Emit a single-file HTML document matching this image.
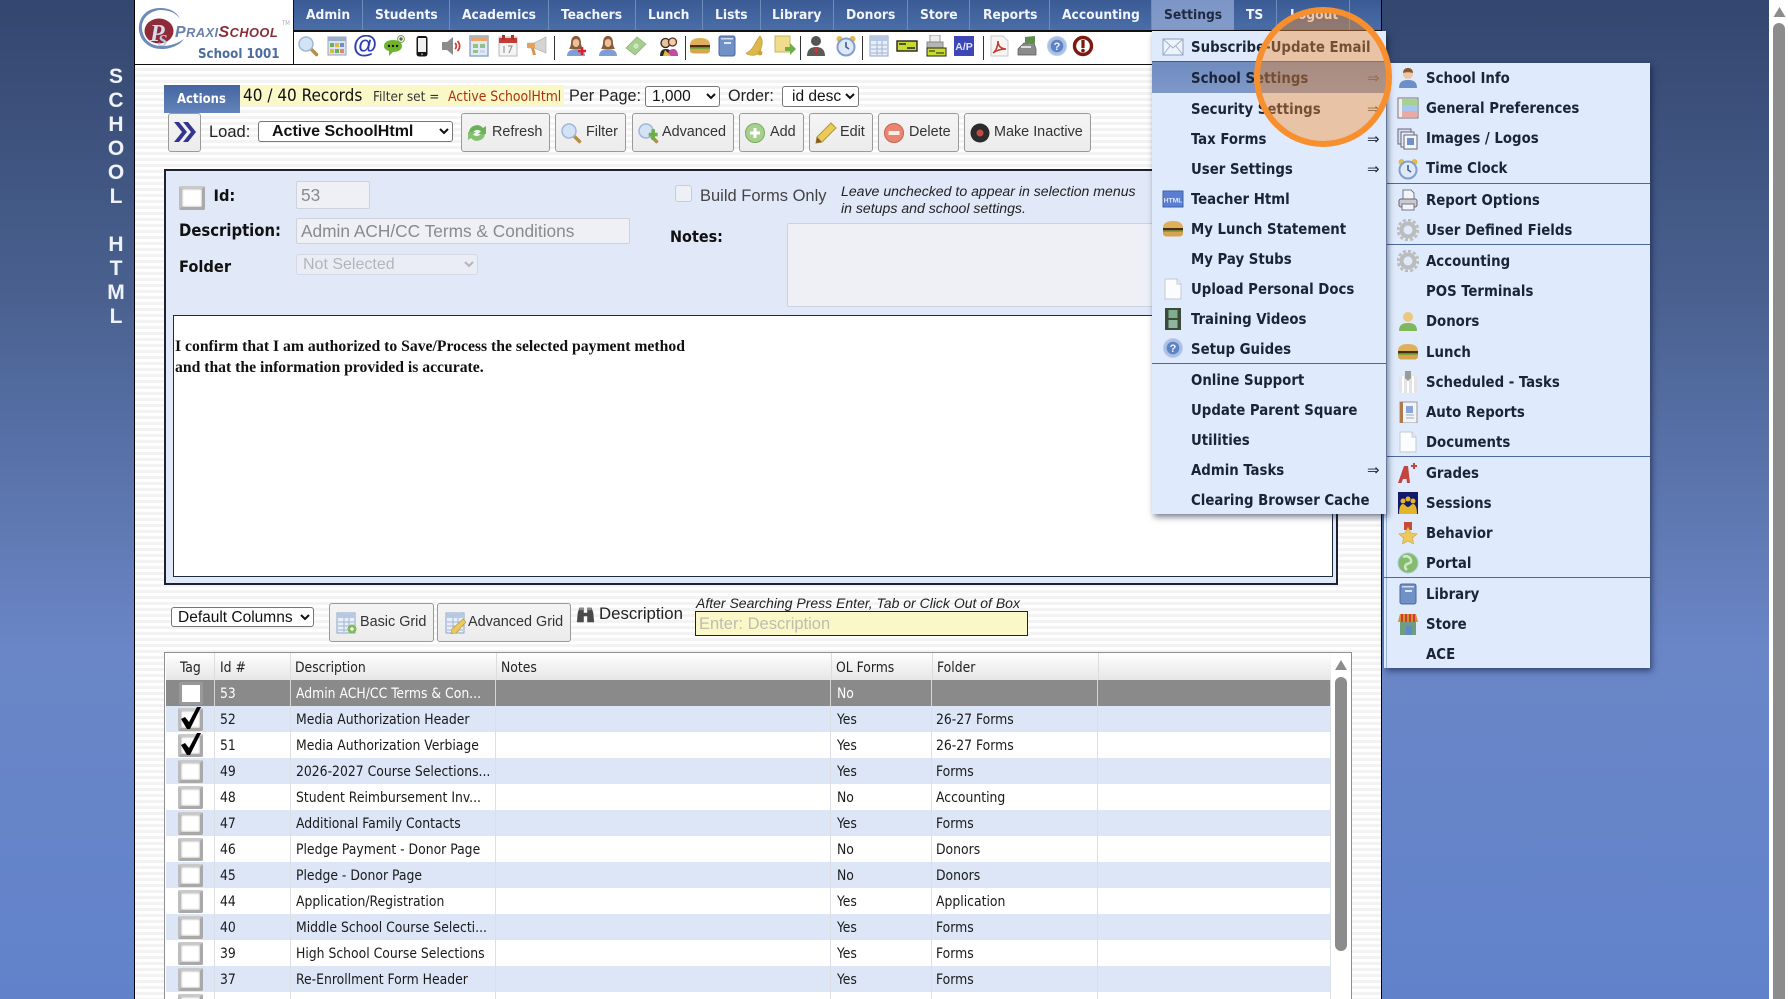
<!DOCTYPE html>
<html><head><meta charset="utf-8"><title>School Html</title>
<style>
*{box-sizing:border-box}
html,body{margin:0;padding:0;width:1788px;height:999px;overflow:hidden;background:#fff}
body{position:relative;font-family:"Liberation Sans",sans-serif;color:#222}
#bg{position:absolute;left:0;top:0;width:1769px;height:999px;background:linear-gradient(180deg,#33466e 0%,#4a6190 30%,#6a86c6 65%,#6182cb 100%)}
#main{position:absolute;left:134px;top:0;width:1248px;height:999px;border-left:1.5px solid #000;border-right:1.5px solid #000}
#stripes{position:absolute;left:135px;top:65px;width:1246px;height:934px;background:repeating-linear-gradient(180deg,#fff 0,#fff 3px,#f3f3f3 3px,#f3f3f3 6px)}
.a{position:absolute;white-space:nowrap;line-height:20px}
.th{font-family:"DejaVu Sans Condensed","DejaVu Sans",sans-serif;font-stretch:condensed}
.b{font-weight:bold}
.nav{position:absolute;top:0;height:31px;background:linear-gradient(180deg,#3a5a94,#4b6ea9);border-right:1px solid #6f8dbb}
.nt{position:absolute;top:5px;color:#f2f5fb;font-size:13.7px;font-weight:bold;white-space:nowrap;line-height:20px;font-family:"DejaVu Sans Condensed","DejaVu Sans",sans-serif;font-stretch:condensed}
.i{position:absolute;width:22px;height:22px;overflow:visible}
.sp{position:absolute;top:36px;height:24px;width:1px;background:#333}
.btn{position:absolute;top:113px;height:39px;border:1px solid #9a9a9a;border-radius:3px;background:linear-gradient(180deg,#f4f4f4,#ececec)}
.bl{position:absolute;white-space:nowrap;line-height:20px;font-size:14.4px;color:#333;font-family:"Liberation Sans",sans-serif;margin-top:1px}
select{position:absolute;background:#fff;border:1px solid #767676;border-radius:3px;font-family:"Liberation Sans",sans-serif;font-size:15.5px;color:#111;padding:0 0 0 5px;margin:0}
.inp{position:absolute;background:#eef0f6;border:1px solid #cdd2dc;border-radius:2px;color:#8a8a8a;font-size:17.3px;line-height:25px;padding-left:4px;white-space:nowrap}
#panel{position:absolute;left:164px;top:169px;width:1174px;height:416px;background:#e1e9f8;border:2px solid #1c2230}
#white{position:absolute;left:173px;top:315px;width:1160px;height:262px;background:#fff;border:1px solid #1f2a3a}
.ser{font-family:"Liberation Serif",serif;font-weight:bold;font-size:15.7px;color:#111}
#grid{position:absolute;left:164px;top:652px;width:1188px;height:360px;background:#fff;border:1px solid #8f8f8f}
#gh{position:absolute;left:166px;top:653px;width:1165px;height:27px;background:linear-gradient(180deg,#fff,#e6e6e6)}
.gh{position:absolute;top:658px;font-size:13.8px;color:#222;line-height:20px;white-space:nowrap;font-family:"DejaVu Sans Condensed","DejaVu Sans",sans-serif;font-stretch:condensed}
.ghs{position:absolute;top:653px;height:27px;width:1px;background:#fff;border-right:1px solid #ddd}
table{position:absolute;left:166px;top:680px;border-collapse:collapse;table-layout:fixed;width:1165px;font-family:"DejaVu Sans Condensed","DejaVu Sans",sans-serif;font-stretch:condensed;font-size:13.8px;color:#1a1a1a}
td{height:26px;padding:1px 0 0 5px;border-right:1px solid #dcdfe4;white-space:nowrap;overflow:hidden;position:relative}
td:nth-child(5){padding-left:6px}
td:nth-child(6){padding-left:4px}
tr:nth-child(even){background:#dce6f6}
tr:nth-child(odd){background:#fff}
tr.s{background:#8a8a8a !important;color:#fff}
tr.s td{border-right-color:#d5d5d5}
.cb{position:absolute;left:12px;top:2px;width:25px;height:23px;background:#fff;border:3px solid #a9a9a9;border-top-color:#c9c9c9;border-left-color:#bdbdbd;border-radius:2px;box-shadow:inset 0 0 2px #999}
.m{position:absolute;background:#dfeafc;box-shadow:2px 3px 6px rgba(10,20,50,.55)}
.mt{position:absolute;white-space:nowrap;line-height:20px;font-size:14.8px;font-weight:bold;color:#1a2436;margin-top:1px;font-family:"DejaVu Sans Condensed","DejaVu Sans",sans-serif;font-stretch:condensed}
.ar{position:absolute;left:1367px;font-size:15px;line-height:20px;color:#1a2436;font-family:"DejaVu Sans",sans-serif}
.ms{position:absolute;height:1px;background:#4a6a9e}
.vl{position:absolute;left:116px;width:30px;margin-left:-15px;text-align:center;color:#eef3fb;font-weight:bold;font-size:21px;line-height:24px;font-family:"Liberation Sans",sans-serif}
</style></head><body>
<svg width="0" height="0" style="position:absolute"><defs>
<symbol id="mag" viewBox="0 0 22 22"><line x1="13" y1="13" x2="19.5" y2="19.5" stroke="#b58e4c" stroke-width="3.5" stroke-linecap="round"/><circle cx="9" cy="9" r="7" fill="#d3e3f6" stroke="#9fb8d8" stroke-width="1.5"/></symbol>
<symbol id="gridi" viewBox="0 0 22 22"><rect x="2" y="2" width="18" height="18" fill="#dde4f0" stroke="#8fa3c0"/><rect x="2" y="2" width="18" height="4" fill="#9aaecb"/><rect x="4" y="8" width="4" height="4" fill="#6fae5a"/><rect x="9" y="8" width="4" height="4" fill="#e2b93f"/><rect x="14" y="8" width="4" height="4" fill="#6c8fc9"/><rect x="4" y="14" width="4" height="4" fill="#e2b93f"/><rect x="9" y="14" width="4" height="4" fill="#6fae5a"/><rect x="14" y="14" width="4" height="4" fill="#d98a6a"/></symbol>
<symbol id="at" viewBox="0 0 22 22"><text x="11" y="18" text-anchor="middle" font-family="Liberation Sans" font-weight="bold" font-size="25" fill="#2e3fb0">@</text></symbol>
<symbol id="chat" viewBox="0 0 22 22"><path d="M1 11c0-4 4-6 9-6s9 2 9 6-4 6-9 6l-4 4v-5c-3-1-5-2-5-5z" fill="#6eb42c"/><circle cx="6" cy="11" r="1.2" fill="#111"/><circle cx="10" cy="11" r="1.2" fill="#111"/><circle cx="14" cy="11" r="1.2" fill="#111"/><circle cx="18" cy="4" r="3.5" fill="#dfe8d0" stroke="#5b8f2a" stroke-width=".7"/><path d="M18 2.3v3.4M16.3 4h3.4" stroke="#333"/></symbol>
<symbol id="phone" viewBox="0 0 22 22"><rect x="5.5" y="1" width="11" height="20.5" rx="2.5" fill="#161616"/><rect x="7" y="3" width="8" height="14" fill="#f0f0f0"/><circle cx="11" cy="19.3" r="1" fill="#999"/></symbol>
<symbol id="spk" viewBox="0 0 22 22"><path d="M1 7h5l6-5v18l-6-5H1z" fill="#8c8c8c"/><path d="M14 8a4 4 0 0 1 0 6M16.5 6a7 7 0 0 1 0 10" fill="none" stroke="#c8443a" stroke-width="1.8"/></symbol>
<symbol id="sheet" viewBox="0 0 22 22"><rect x="2" y="1" width="18" height="20" fill="#e3e9f4" stroke="#8da4c8" stroke-width="1.4"/><rect x="3" y="2" width="16" height="4" fill="#eaa65f"/><path d="M5 9h5v4H5zM12 9h5v4h-5zM5 15h5v3H5z" fill="#8fc38a"/><rect x="12" y="15" width="5" height="3" fill="#c7d7ee"/></symbol>
<symbol id="cal" viewBox="0 0 22 22"><rect x="2" y="2" width="18" height="19" fill="#f4f4f4" stroke="#b9b9b9"/><rect x="2" y="3" width="18" height="5" fill="#c53c34"/><rect x="5" y="0" width="3" height="5" fill="#a33"/><rect x="14" y="0" width="3" height="5" fill="#a33"/><path d="M7 11v7M11 11h4l-3 7" fill="none" stroke="#999" stroke-width="1.2"/></symbol>
<symbol id="mega" viewBox="0 0 22 22"><path d="M20 2v16L8 13H2V8h6z" fill="#d4d4d4" stroke="#a5a5a5" stroke-width=".6"/><path d="M1 8h8v5H1z" fill="#e5a35a"/><path d="M5 13l2 7h3l-2-7z" fill="#dd9048"/></symbol>
<symbol id="woman" viewBox="0 0 22 22"><path d="M2 21c0-5 4-7 9-7s9 2 9 7z" fill="#7e9fd3"/><path d="M11 1c4 0 5 4 5 7s2 6 2 6H4s2-3 2-6 1-7 5-7z" fill="#8a5a3a"/><ellipse cx="11" cy="8" rx="3.3" ry="4" fill="#e9c29a"/></symbol>
<symbol id="womanp" viewBox="0 0 22 22"><use href="#woman"/><path d="M17 12v8M13 16h8" stroke="#d8232a" stroke-width="2.6"/></symbol>
<symbol id="money" viewBox="0 0 22 22"><path d="M1 13L12 2l9 7-11 11z" fill="#a6cf8f" stroke="#85b06f" stroke-width=".7"/><circle cx="11" cy="11" r="2.6" fill="#cfe6bf"/></symbol>
<symbol id="couple" viewBox="0 0 22 22"><path d="M3 21c0-5 2-7 6-7s6 3 6 7z" fill="#2a2a2a"/><circle cx="8.5" cy="8" r="4.5" fill="#e9c29a" stroke="#222" stroke-width="1.3"/><path d="M11 21c0-5 2-7 5-7s5 2 5 7z" fill="#c24aa0"/><circle cx="15.5" cy="7" r="4" fill="#f0cdaa" stroke="#5b3020" stroke-width="1.3"/><path d="M8 15l6 6H6z" fill="#e0bc3a"/></symbol>
<symbol id="burger" viewBox="0 0 22 22"><path d="M1 10c0-5 4-7 10-7s10 2 10 7z" fill="#dfb05a"/><rect x="1" y="10" width="20" height="2.4" fill="#4d2c12"/><rect x="1" y="12.4" width="20" height="1.6" fill="#7aa53d"/><path d="M1 14h20v1.500c0 2-2 3-4 3H5c-2 0-4-1-4-3z" fill="#d9a34e"/></symbol>
<symbol id="book" viewBox="0 0 22 22"><rect x="3" y="1" width="16" height="20" rx="2" fill="#6f91c6" stroke="#48689e"/><rect x="5" y="3" width="12" height="1.5" fill="#cfdcf0"/><rect x="8" y="7" width="7" height="2" fill="#dce6f6"/></symbol>
<symbol id="bell" viewBox="0 0 22 22"><path d="M16 1c3 3 3 7 1 13s-4 5-6 6-8 0-9-2c3-1 5-3 7-6s4-8 7-11z" fill="#dcb84a" stroke="#b8962f" stroke-width=".6"/><circle cx="16" cy="18" r="2.4" fill="#c9a338"/></symbol>
<symbol id="note" viewBox="0 0 22 22"><rect x="1" y="1" width="15" height="16" fill="#f0dc8a" stroke="#c9b566"/><path d="M11 12h5V8l6 6-6 6v-4h-5z" fill="#6fae45"/></symbol>
<symbol id="man" viewBox="0 0 22 22"><circle cx="11" cy="6" r="5" fill="#555"/><path d="M2 21c0-6 3-9 9-9s9 3 9 9z" fill="#5a5a5a"/><path d="M11 12l-2 3 2 6 2-6z" fill="#c33"/></symbol>
<symbol id="clock" viewBox="0 0 22 22"><circle cx="4.5" cy="4" r="3" fill="#e5b94a"/><circle cx="17.5" cy="4" r="3" fill="#e5b94a"/><circle cx="11" cy="12" r="8.5" fill="#dfe9f6" stroke="#7f9fd0" stroke-width="2"/><path d="M11 7v5l3 2" fill="none" stroke="#3d5f9e" stroke-width="1.6"/></symbol>
<symbol id="table" viewBox="0 0 22 22"><rect x="2" y="1" width="18" height="20" fill="#e9eff8" stroke="#8da4c8"/><rect x="3" y="2" width="16" height="4" fill="#b7c8e4"/><path d="M3 10h16M3 14h16M3 18h16M9 6v14M14 6v14" stroke="#9fb5d8"/></symbol>
<symbol id="chk" viewBox="0 0 22 22"><rect x="1" y="6" width="20" height="10" fill="#c9dc2e" stroke="#222" stroke-width="1.4"/><path d="M3 9h7M11 13h8" stroke="#222" stroke-width="1.4"/></symbol>
<symbol id="prn" viewBox="0 0 22 22"><rect x="5" y="0" width="10" height="8" fill="#eee" stroke="#999"/><rect x="2" y="7" width="16" height="6" fill="#b5b5b5" stroke="#888"/><rect x="2" y="13" width="19" height="8" fill="#c9dc2e" stroke="#222"/><path d="M4 16h6M11 18h8" stroke="#222"/></symbol>
<symbol id="ap" viewBox="0 0 22 22"><rect x="1" y="1" width="20" height="20" fill="#3d47b5"/><text x="11" y="15" text-anchor="middle" font-family="Liberation Sans" font-weight="bold" font-size="10.5" fill="#dfe3fa">A/P</text></symbol>
<symbol id="pdf" viewBox="0 0 22 22"><path d="M3 1h12l5 5v15H3z" fill="#f7f5f3" stroke="#c9c9c9"/><path d="M5 18c3-2 5-7 5-12 0 5 3 8 8 8-5 0-9 1-13 4z" fill="none" stroke="#c63a32" stroke-width="1.6"/></symbol>
<symbol id="reg" viewBox="0 0 22 22"><path d="M2 14l6-6h10l2 6v6H2z" fill="#8b8b8b" stroke="#555" stroke-width=".7"/><path d="M9 2l10-1v7L9 9z" fill="#5c8d4a"/><rect x="5" y="11" width="10" height="2" fill="#ddd"/></symbol>
<symbol id="help" viewBox="0 0 22 22"><circle cx="11" cy="11" r="9.5" fill="#a9c0e6" stroke="#bfcfe9"/><circle cx="11" cy="11" r="6.3" fill="#5f82c4"/><text x="11" y="15" text-anchor="middle" font-family="Liberation Sans" font-weight="bold" font-size="11" fill="#f2f5fb">?</text></symbol>
<symbol id="pow" viewBox="0 0 22 22"><circle cx="11" cy="11" r="8.5" fill="#fff" stroke="#7c1a12" stroke-width="3.4"/><rect x="9.4" y="5" width="3.2" height="8" fill="#7c1a12"/><circle cx="11" cy="15.6" r="1.8" fill="#7c1a12"/></symbol>
<symbol id="refresh" viewBox="0 0 22 22"><path d="M3 10a8 8 0 0 1 14-4l3-2v8h-8l3-2.5a5 5 0 0 0-8 1z" fill="#6bb05a"/><path d="M19 12a8 8 0 0 1-14 4l-3 2v-8h8l-3 2.500a5 5 0 0 0 8-1z" fill="#86c06f"/></symbol>
<symbol id="adv" viewBox="0 0 22 22"><use href="#mag"/><path d="M14 7h4v4h3v4h-3v4h-4v-4h-3v-4h3z" fill="#6fae45" transform="scale(.9) translate(2,1)"/></symbol>
<symbol id="add" viewBox="0 0 22 22"><circle cx="11" cy="11" r="9.500" fill="#a6d08c" stroke="#7cab63"/><path d="M11 6v10M6 11h10" stroke="#fff" stroke-width="3"/></symbol>
<symbol id="edit" viewBox="0 0 22 22"><path d="M16 1l5 5L7 20l-6 1 1-6z" fill="#ecc95b" stroke="#b8962f"/><path d="M2 15l5 5-6 1z" fill="#7d5a30"/></symbol>
<symbol id="del" viewBox="0 0 22 22"><circle cx="11" cy="11" r="9.500" fill="#e88672" stroke="#c9604f"/><rect x="5.500" y="9" width="11" height="4" fill="#f9ece8"/></symbol>
<symbol id="ina" viewBox="0 0 22 22"><circle cx="11" cy="11" r="9.500" fill="#2c2c2c"/><circle cx="11" cy="11" r="3.500" fill="#c44a44"/></symbol>
<symbol id="bgrid" viewBox="0 0 22 22"><use href="#table"/><circle cx="17" cy="17" r="4.500" fill="#7dbb55"/><path d="M17 15v4M15 17h4" stroke="#fff" stroke-width="1.400"/></symbol>
<symbol id="agrid" viewBox="0 0 22 22"><use href="#table"/><path d="M19 7l3 3-10 11-5 1 1-5z" fill="#ecc95b" stroke="#b8962f" stroke-width=".6"/></symbol>
<symbol id="bino" viewBox="0 0 22 22"><path d="M2 9l2-6h5v6h4V3h5l2 6 1 11h-8v-7h-4v7H1z" fill="#4a4a4a"/><rect x="4" y="3" width="5" height="3" fill="#888"/><rect x="13" y="3" width="5" height="3" fill="#888"/></symbol>
<symbol id="mail" viewBox="0 0 22 22"><rect x="1" y="3" width="20" height="16" fill="#eef3fb" stroke="#8ea1bd"/><path d="M1 3l10 9 10-9M1 19l7-9M21 19l-7-9" fill="none" stroke="#9db0cc"/></symbol>
<symbol id="html" viewBox="0 0 22 22"><rect x="1" y="3" width="20" height="16" fill="#5a7fd0" stroke="#3f62ae"/><text x="11" y="14.500" text-anchor="middle" font-family="Liberation Sans" font-weight="bold" font-size="6.800" fill="#dfe8fa">HTML</text></symbol>
<symbol id="doc" viewBox="0 0 22 22"><path d="M3 1h12l4 5v15H3z" fill="#fbfcfe" stroke="#c4c9d1"/><path d="M15 1v5h4" fill="#e9edf3" stroke="#c4c9d1"/></symbol>
<symbol id="film" viewBox="0 0 22 22"><rect x="3" y="0" width="16" height="22" fill="#3d4a3a"/><rect x="6.500" y="2" width="9" height="8" fill="#7fae8a"/><rect x="6.500" y="12" width="9" height="8" fill="#8fb59c"/></symbol>
<symbol id="pers" viewBox="0 0 22 22"><path d="M2 21c0-6 3-8 9-8s9 2 9 8z" fill="#6c8fc9"/><circle cx="11" cy="7" r="5" fill="#ecc7a3"/><path d="M6 6c0-4 3-5 5-5s5 1 5 5c-3-1-7-1-10 0z" fill="#8a5a2f"/></symbol>
<symbol id="pref" viewBox="0 0 22 22"><rect x="1" y="1" width="20" height="20" fill="#eee" stroke="#777"/><rect x="5" y="2" width="15" height="6" fill="#a4d28f"/><rect x="5" y="8" width="15" height="6" fill="#a9c6ee"/><rect x="5" y="14" width="15" height="6" fill="#eba9a6"/></symbol>
<symbol id="imgs" viewBox="0 0 22 22"><rect x="1" y="1" width="13" height="15" fill="#d5dff0" stroke="#667"/><rect x="4" y="4" width="13" height="15" fill="#e8eef8" stroke="#667"/><rect x="7" y="7" width="13" height="14" fill="#f3f6fb" stroke="#667"/><rect x="10" y="10" width="7" height="7" fill="#6f91c6"/></symbol>
<symbol id="prt" viewBox="0 0 22 22"><path d="M6 1h8l3 3v6H6z" fill="#f2f4f8" stroke="#778"/><rect x="2" y="10" width="18" height="8" rx="2" fill="#c9c9cf" stroke="#667"/><rect x="5" y="15" width="12" height="6" fill="#f2f4f8" stroke="#778"/></symbol>
<symbol id="gear" viewBox="0 0 22 22"><circle cx="11" cy="11" r="6.500" fill="none" stroke="#bcbcbc" stroke-width="4"/><circle cx="11" cy="11" r="10" fill="none" stroke="#bcbcbc" stroke-width="2.800" stroke-dasharray="3 2.200"/></symbol>
<symbol id="pgreen" viewBox="0 0 22 22"><path d="M2 21c0-6 3-8 9-8s9 2 9 8z" fill="#7fb85a"/><circle cx="11" cy="7" r="5" fill="#ecc77e"/></symbol>
<symbol id="sched" viewBox="0 0 22 22"><rect x="2" y="5" width="18" height="17" fill="#e4e4e6"/><path d="M6 5v17M11 8v14M16 5v17" stroke="#fff" stroke-width="2"/><path d="M8 0h6v7l-3 3-3-3z" fill="#9a9a9a"/></symbol>
<symbol id="auto" viewBox="0 0 22 22"><rect x="3" y="1" width="17" height="21" fill="#f2f4f8" stroke="#999"/><rect x="3" y="1" width="3" height="21" fill="#b07a4a"/><rect x="9" y="5" width="7" height="7" fill="#8aa5d6"/><path d="M9 14h8M9 17h8" stroke="#9ab"/></symbol>
<symbol id="grd" viewBox="0 0 22 22"><path d="M1 21L7 4h4l2 17h-3l-.5-4H6l-1.500 4z" fill="#c2453f"/><path d="M17 1v6M14 4h6" stroke="#c2453f" stroke-width="2"/></symbol>
<symbol id="sess" viewBox="0 0 22 22"><rect x="1" y="0" width="20" height="22" fill="#141a6a"/><circle cx="6" cy="9" r="2.500" fill="#e2b52a"/><circle cx="11" cy="7" r="2.500" fill="#e2b52a"/><circle cx="16" cy="9" r="2.500" fill="#e2b52a"/><path d="M2 22c0-7 2-10 4-10s3 3 5 3 3-3 5-3 4 3 4 10z" fill="#e2b52a"/></symbol>
<symbol id="med" viewBox="0 0 22 22"><rect x="7" y="0" width="8" height="8" fill="#c74a3a"/><path d="M11 5l3 6 6 1-4.500 4 1 6-5.500-3-5.500 3 1-6L2 12l6-1z" fill="#eec85c" stroke="#c9a338" stroke-width=".6"/></symbol>
<symbol id="glob" viewBox="0 0 22 22"><circle cx="11" cy="11" r="10" fill="#86bb6d" stroke="#a8cfd4"/><path d="M6 5c4-2 7 0 8 3s-2 3-4 4-3 4 0 6" fill="none" stroke="#cfe8c8" stroke-width="2.500"/></symbol>
<symbol id="str" viewBox="0 0 22 22"><rect x="3" y="9" width="16" height="13" fill="#6f9d7f"/><rect x="9" y="13" width="6" height="9" fill="#5f8ac4"/><path d="M1 9l2-8h16l2 8z" fill="#d8902f"/><path d="M5 1v8M9 1v8M13 1v8M17 1v8" stroke="#c33" stroke-width="1.800"/></symbol>
</defs></svg>

<div id="bg"></div>
<div id="main"></div>
<div id="stripes"></div>

<!-- side letters -->
<div class="vl" style="top:65px">S</div><div class="vl" style="top:89px">C</div><div class="vl" style="top:113px">H</div><div class="vl" style="top:137px">O</div><div class="vl" style="top:161px">O</div><div class="vl" style="top:185px">L</div>
<div class="vl" style="top:233px">H</div><div class="vl" style="top:257px">T</div><div class="vl" style="top:281px">M</div><div class="vl" style="top:305px">L</div>

<!-- header -->
<div style="position:absolute;left:135px;top:0;width:1246px;height:65px;background:#fff;border-bottom:1.5px solid #111"></div>
<div style="position:absolute;left:293px;top:0;width:1px;height:65px;background:#111"></div>
<svg style="position:absolute;left:136px;top:4px" width="60" height="52" viewBox="0 0 60 52"><path d="M24 4C10 4 2 14 3 26c1 10 9 19 23 19 9 0 18-4 22-10-6 4-13 7-22 7-13 0-19-8-20-17C5 15 13 7 24 6c10 0 16 3 20 9C41 8 34 4 24 4z" fill="#6d8bb8"/><ellipse cx="23" cy="27" rx="14.500" ry="12.500" fill="#8f2a38"/><text x="14" y="37" font-family="Liberation Serif" font-style="italic" font-weight="bold" font-size="24" fill="#d5dcec">P</text><text x="22" y="42" font-family="Liberation Serif" font-style="italic" font-weight="bold" font-size="17" fill="#b9c6de">S</text></svg>
<div class="a b" style="left:175px;top:23px;font-family:'Liberation Sans',sans-serif;font-style:italic;color:#6a80ab;font-size:12.800px;letter-spacing:.45px"><span style="font-size:16px">P</span>RAXI<span style="color:#8b2d38"><span style="font-size:16px">S</span>CHOOL</span></div>
<div class="a th" style="left:282px;top:14px;font-size:6px;color:#aab">TM</div>
<div class="a th b" style="left:198px;top:45px;font-size:13.200px;color:#4c6c9e">School 1001</div>

<!-- nav -->
<div class="nav" style="left:294px;width:69px"></div><div class="nt" style="left:306px">Admin</div>
<div class="nav" style="left:363px;width:87px"></div><div class="nt" style="left:375px">Students</div>
<div class="nav" style="left:450px;width:99px"></div><div class="nt" style="left:462px">Academics</div>
<div class="nav" style="left:549px;width:87px"></div><div class="nt" style="left:561px">Teachers</div>
<div class="nav" style="left:636px;width:67px"></div><div class="nt" style="left:648px">Lunch</div>
<div class="nav" style="left:703px;width:58px"></div><div class="nt" style="left:715px">Lists</div>
<div class="nav" style="left:761px;width:73px"></div><div class="nt" style="left:772px">Library</div>
<div class="nav" style="left:834px;width:74px"></div><div class="nt" style="left:846px">Donors</div>
<div class="nav" style="left:908px;width:62px"></div><div class="nt" style="left:920px">Store</div>
<div class="nav" style="left:970px;width:80px"></div><div class="nt" style="left:983px">Reports</div>
<div class="nav" style="left:1050px;width:102px"></div><div class="nt" style="left:1062px">Accounting</div>
<div class="nav" style="left:1152px;width:82px;background:linear-gradient(180deg,#7b95c6,#839cca);border:0"></div><div class="nt" style="left:1164px;color:#1d2a40">Settings</div>
<div class="nav" style="left:1234px;width:43px"></div><div class="nt" style="left:1246px">TS</div>
<div class="nav" style="left:1277px;width:73px"></div><div class="nt" style="left:1290px">Logout</div>
<div class="nav" style="left:1350px;width:31px;border:0"></div>
<div style="position:absolute;left:294px;top:30px;width:1087px;height:1.500px;background:#111"></div>

<!-- toolbar -->
<svg class="i" style="left:297px;top:35px"><use href="#mag"/></svg>
<svg class="i" style="left:326px;top:35px"><use href="#gridi"/></svg>
<svg class="i" style="left:354px;top:35px"><use href="#at"/></svg>
<svg class="i" style="left:383px;top:35px"><use href="#chat"/></svg>
<svg class="i" style="left:411px;top:35px"><use href="#phone"/></svg>
<svg class="i" style="left:441px;top:35px"><use href="#spk"/></svg>
<svg class="i" style="left:468px;top:35px"><use href="#sheet"/></svg>
<svg class="i" style="left:497px;top:35px"><use href="#cal"/></svg>
<svg class="i" style="left:526px;top:35px"><use href="#mega"/></svg>
<div class="sp" style="left:554px"></div>
<svg class="i" style="left:565px;top:35px"><use href="#womanp"/></svg>
<svg class="i" style="left:597px;top:35px"><use href="#woman"/></svg>
<svg class="i" style="left:625px;top:35px"><use href="#money"/></svg>
<svg class="i" style="left:657px;top:35px"><use href="#couple"/></svg>
<div class="sp" style="left:685px"></div>
<svg class="i" style="left:689px;top:35px"><use href="#burger"/></svg>
<svg class="i" style="left:716px;top:35px"><use href="#book"/></svg>
<svg class="i" style="left:744px;top:35px"><use href="#bell"/></svg>
<svg class="i" style="left:774px;top:35px"><use href="#note"/></svg>
<div class="sp" style="left:800px"></div>
<svg class="i" style="left:805px;top:35px"><use href="#man"/></svg>
<svg class="i" style="left:835px;top:35px"><use href="#clock"/></svg>
<div class="sp" style="left:862px"></div>
<svg class="i" style="left:868px;top:35px"><use href="#table"/></svg>
<svg class="i" style="left:896px;top:35px"><use href="#chk"/></svg>
<svg class="i" style="left:925px;top:35px"><use href="#prn"/></svg>
<svg class="i" style="left:953px;top:35px"><use href="#ap"/></svg>
<div class="sp" style="left:983px"></div>
<svg class="i" style="left:988px;top:35px"><use href="#pdf"/></svg>
<svg class="i" style="left:1016px;top:35px"><use href="#reg"/></svg>
<svg class="i" style="left:1046px;top:35px"><use href="#help"/></svg>
<svg class="i" style="left:1072px;top:35px"><use href="#pow"/></svg>

<!-- actions row -->
<div style="position:absolute;left:164px;top:85px;width:76px;height:28px;background:linear-gradient(180deg,#44659f,#6283bb)"></div>
<div class="a th b" style="left:177px;top:90px;font-size:13px;color:#fff">Actions</div>
<div style="position:absolute;left:240px;top:85px;width:324px;height:21px;background:#fbf8c8"></div>
<div class="a th" style="left:243px;top:86px;font-size:17px;color:#111">40 / 40 Records</div>
<div class="a th" style="left:373px;top:87px;font-size:13.500px;color:#333">Filter set =</div>
<div class="a th" style="left:448px;top:87px;font-size:13.800px;color:#a8330f">Active SchoolHtml</div>
<div class="a" style="left:569px;top:86px;font-size:16.200px;color:#222">Per Page:</div>
<select style="left:645px;top:86px;width:75px;height:21px;padding-left:2px"><option>1,000</option></select>
<div class="a" style="left:728px;top:86px;font-size:16.200px;color:#222">Order:</div>
<select style="left:782px;top:86px;width:77px;height:21px"><option>id desc</option></select>

<!-- row 2 -->
<div class="btn" style="left:168px;width:33px"></div>
<svg style="position:absolute;left:173px;top:121px" width="23" height="22" viewBox="0 0 23 22"><path d="M1 1l8 10-8 10h5l8-10L6 1zM10 1l8 10-8 10h5l8-10L15 1z" fill="#33358f"/></svg>
<div class="a" style="left:209px;top:122px;font-size:16.500px;color:#222">Load:</div>
<select style="left:258px;top:121px;width:195px;height:21px;font-weight:bold;padding-left:9px;font-size:16px"><option>Active SchoolHtml</option></select>
<div class="btn" style="left:461px;width:89px"></div>
<svg class="i" style="left:466px;top:122px"><use href="#refresh"/></svg><div class="bl" style="left:492px;top:121px">Refresh</div>
<div class="btn" style="left:555px;width:71px"></div>
<svg class="i" style="left:560px;top:122px"><use href="#mag"/></svg><div class="bl" style="left:586px;top:121px">Filter</div>
<div class="btn" style="left:632px;width:102px"></div>
<svg class="i" style="left:637px;top:122px"><use href="#adv"/></svg><div class="bl" style="left:662px;top:121px">Advanced</div>
<div class="btn" style="left:739px;width:65px"></div>
<svg class="i" style="left:744px;top:122px"><use href="#add"/></svg><div class="bl" style="left:770px;top:121px">Add</div>
<div class="btn" style="left:809px;width:64px"></div>
<svg class="i" style="left:815px;top:122px"><use href="#edit"/></svg><div class="bl" style="left:840px;top:121px">Edit</div>
<div class="btn" style="left:878px;width:81px"></div>
<svg class="i" style="left:883px;top:122px"><use href="#del"/></svg><div class="bl" style="left:909px;top:121px">Delete</div>
<div class="btn" style="left:964px;width:127px"></div>
<svg class="i" style="left:969px;top:122px"><use href="#ina"/></svg><div class="bl" style="left:994px;top:121px">Make Inactive</div>

<!-- form panel -->
<div id="panel"></div>
<div class="cb" style="left:179px;top:186px;width:26px;height:24px"></div>
<div class="a th b" style="left:213.500px;top:186px;font-size:16.300px;color:#111">Id:</div>
<div class="inp" style="left:296px;top:181px;width:74px;height:28px;line-height:26px">53</div>
<div class="a th b" style="left:179px;top:221px;font-size:16.500px;color:#111">Description:</div>
<div class="inp" style="left:296px;top:218px;width:334px;height:26px">Admin ACH/CC Terms &amp; Conditions</div>
<div class="a th b" style="left:179px;top:257px;font-size:16.300px;color:#111">Folder</div>
<select disabled style="left:296px;top:254px;width:182px;height:21px;background:#eef0f6;border-color:#cdd2dc;color:#a0a0a0;padding-left:2px;font-size:16px"><option>Not Selected</option></select>
<div style="position:absolute;left:675px;top:185px;width:17px;height:17px;background:#eef0f6;border:1px solid #c8ccd6;border-radius:3px"></div>
<div class="a" style="left:700px;top:186px;font-size:16.500px;color:#444">Build Forms Only</div>
<div class="a" style="left:841px;top:181px;font-size:14.100px;font-style:italic;color:#222">Leave unchecked to appear in selection menus</div>
<div class="a" style="left:841px;top:197.500px;font-size:14.100px;font-style:italic;color:#222">in setups and school settings.</div>
<div class="a th b" style="left:670px;top:227px;font-size:16px;color:#111">Notes:</div>
<div style="position:absolute;left:787px;top:223px;width:400px;height:84px;background:#eef0f6;border:1px solid #cdd2dc;border-radius:2px"></div>
<div id="white"></div>
<div class="a ser" style="left:175px;top:337px">I confirm that I am authorized to Save/Process the selected payment method</div>
<div class="a ser" style="left:175px;top:358px">and that the information provided is accurate.</div>

<!-- grid controls -->
<select style="left:171px;top:607px;width:143px;height:20px;padding-left:2px"><option>Default Columns</option></select>
<div class="btn" style="left:329px;top:603px;width:105px"></div>
<svg class="i" style="left:335px;top:612px"><use href="#bgrid"/></svg><div class="bl" style="left:360px;top:611px">Basic Grid</div>
<div class="btn" style="left:437px;top:603px;width:134px"></div>
<svg class="i" style="left:444px;top:612px"><use href="#agrid"/></svg><div class="bl" style="left:468px;top:611px">Advanced Grid</div>
<svg style="position:absolute;left:576px;top:605px" width="19" height="19" viewBox="0 0 22 22"><use href="#bino"/></svg>
<div class="a" style="left:599px;top:604px;font-size:16.800px;color:#222">Description</div>
<div class="a" style="left:696px;top:593px;font-size:14px;font-style:italic;color:#222">After Searching Press Enter, Tab or Click Out of Box</div>
<div style="position:absolute;left:695px;top:611px;width:333px;height:25px;background:#fbf8c8;border:1px solid #222"></div>
<div class="a" style="left:699px;top:613.500px;font-size:16.500px;color:#bdbdb0">Enter: Description</div>

<!-- grid -->
<div id="grid"></div>
<div id="gh"></div>
<div class="gh" style="left:180px">Tag</div>
<div class="gh" style="left:220px">Id #</div>
<div class="gh" style="left:295px">Description</div>
<div class="gh" style="left:501px">Notes</div>
<div class="gh" style="left:836px">OL Forms</div>
<div class="gh" style="left:937px">Folder</div>
<div class="ghs" style="left:214px"></div><div class="ghs" style="left:290px"></div><div class="ghs" style="left:496px"></div><div class="ghs" style="left:831px"></div><div class="ghs" style="left:932px"></div><div class="ghs" style="left:1098px"></div>
<table><colgroup><col style="width:48.500px"><col style="width:76px"><col style="width:205px"><col style="width:335px"><col style="width:101px"><col style="width:166px"><col></colgroup><tbody>
<tr class="s"><td></td><td>53</td><td>Admin ACH/CC Terms &amp; Con...</td><td></td><td>No</td><td></td><td></td></tr>
<tr><td></td><td>52</td><td>Media Authorization Header</td><td></td><td>Yes</td><td>26-27 Forms</td><td></td></tr>
<tr><td></td><td>51</td><td>Media Authorization Verbiage</td><td></td><td>Yes</td><td>26-27 Forms</td><td></td></tr>
<tr><td></td><td>49</td><td>2026-2027 Course Selections...</td><td></td><td>Yes</td><td>Forms</td><td></td></tr>
<tr><td></td><td>48</td><td>Student Reimbursement Inv...</td><td></td><td>No</td><td>Accounting</td><td></td></tr>
<tr><td></td><td>47</td><td>Additional Family Contacts</td><td></td><td>Yes</td><td>Forms</td><td></td></tr>
<tr><td></td><td>46</td><td>Pledge Payment - Donor Page</td><td></td><td>No</td><td>Donors</td><td></td></tr>
<tr><td></td><td>45</td><td>Pledge - Donor Page</td><td></td><td>No</td><td>Donors</td><td></td></tr>
<tr><td></td><td>44</td><td>Application/Registration</td><td></td><td>Yes</td><td>Application</td><td></td></tr>
<tr><td></td><td>40</td><td>Middle School Course Selecti...</td><td></td><td>Yes</td><td>Forms</td><td></td></tr>
<tr><td></td><td>39</td><td>High School Course Selections</td><td></td><td>Yes</td><td>Forms</td><td></td></tr>
<tr><td></td><td>37</td><td>Re-Enrollment Form Header</td><td></td><td>Yes</td><td>Forms</td><td></td></tr>
<tr><td></td><td></td><td></td><td></td><td></td><td></td><td></td></tr>
</tbody></table>
<div class="cb" style="left:179px;top:682px;border-color:#999;width:24px;box-shadow:none"></div>
<div class="cb" style="left:178px;top:708px"></div><div class="cb" style="left:178px;top:734px"></div><div class="cb" style="left:178px;top:760px"></div><div class="cb" style="left:178px;top:786px"></div><div class="cb" style="left:178px;top:812px"></div><div class="cb" style="left:178px;top:838px"></div><div class="cb" style="left:178px;top:864px"></div><div class="cb" style="left:178px;top:890px"></div><div class="cb" style="left:178px;top:916px"></div><div class="cb" style="left:178px;top:942px"></div><div class="cb" style="left:178px;top:968px"></div><div class="cb" style="left:178px;top:994px"></div>
<svg style="position:absolute;left:179px;top:706px" width="23" height="24" viewBox="0 0 23 24"><path d="M2 13l4-2 4 5L18 1h4L11 23H8z" fill="#000"/></svg>
<svg style="position:absolute;left:179px;top:732px" width="23" height="24" viewBox="0 0 23 24"><path d="M2 13l4-2 4 5L18 1h4L11 23H8z" fill="#000"/></svg>
<svg style="position:absolute;left:1333px;top:658px" width="16" height="14"><path d="M8 2l6 10H2z" fill="#8c8c8c"/></svg>
<div style="position:absolute;left:1335px;top:677px;width:12px;height:274px;background:#8c8c8c;border-radius:6px"></div>

<!-- page scrollbar -->
<svg style="position:absolute;left:1773px;top:5px" width="13" height="14"><path d="M6.500 2l6 10H.5z" fill="#8c8c8c"/></svg>
<div style="position:absolute;left:1773px;top:23px;width:12px;height:976px;background:#8c8c8c;border-radius:6px 6px 0 0"></div>

<!-- menu 2 -->
<div class="m" style="left:1384px;top:62.500px;width:266px;height:605.500px"></div>
<div style="position:absolute;left:1386px;top:62px;width:1px;height:606px;background:#9db4d8"></div>
<div class="mt" style="left:1426px;top:68px">School Info</div>
<div class="mt" style="left:1426px;top:98px">General Preferences</div>
<div class="mt" style="left:1426px;top:128px">Images / Logos</div>
<div class="mt" style="left:1426px;top:158px">Time Clock</div>
<div class="ms" style="left:1387px;top:183px;width:263px"></div>
<div class="mt" style="left:1426px;top:189.500px">Report Options</div>
<div class="mt" style="left:1426px;top:219.500px">User Defined Fields</div>
<div class="ms" style="left:1387px;top:244px;width:263px"></div>
<div class="mt" style="left:1426px;top:250.500px">Accounting</div>
<div class="mt" style="left:1426px;top:280.500px">POS Terminals</div>
<div class="mt" style="left:1426px;top:310.500px">Donors</div>
<div class="mt" style="left:1426px;top:341.500px">Lunch</div>
<div class="mt" style="left:1426px;top:371.500px">Scheduled - Tasks</div>
<div class="mt" style="left:1426px;top:401.500px">Auto Reports</div>
<div class="mt" style="left:1426px;top:431.500px">Documents</div>
<div class="ms" style="left:1387px;top:456px;width:263px"></div>
<div class="mt" style="left:1426px;top:462.500px">Grades</div>
<div class="mt" style="left:1426px;top:492.500px">Sessions</div>
<div class="mt" style="left:1426px;top:522.500px">Behavior</div>
<div class="mt" style="left:1426px;top:552.500px">Portal</div>
<div class="ms" style="left:1384px;top:577px;width:266px"></div>
<div class="mt" style="left:1426px;top:583.500px">Library</div>
<div class="mt" style="left:1426px;top:613.500px">Store</div>
<div class="mt" style="left:1426px;top:643.500px">ACE</div>
<svg class="i" style="left:1397px;top:67px"><use href="#pers"/></svg>
<svg class="i" style="left:1397px;top:97px"><use href="#pref"/></svg>
<svg class="i" style="left:1397px;top:128px"><use href="#imgs"/></svg>
<svg class="i" style="left:1397px;top:158px"><use href="#clock"/></svg>
<svg class="i" style="left:1397px;top:189px"><use href="#prt"/></svg>
<svg class="i" style="left:1397px;top:219px"><use href="#gear"/></svg>
<svg class="i" style="left:1397px;top:250px"><use href="#gear"/></svg>
<svg class="i" style="left:1397px;top:310px"><use href="#pgreen"/></svg>
<svg class="i" style="left:1397px;top:341px"><use href="#burger"/></svg>
<svg class="i" style="left:1397px;top:371px"><use href="#sched"/></svg>
<svg class="i" style="left:1397px;top:401px"><use href="#auto"/></svg>
<svg class="i" style="left:1397px;top:431px"><use href="#doc"/></svg>
<svg class="i" style="left:1397px;top:462px"><use href="#grd"/></svg>
<svg class="i" style="left:1397px;top:492px"><use href="#sess"/></svg>
<svg class="i" style="left:1397px;top:522px"><use href="#med"/></svg>
<svg class="i" style="left:1397px;top:552px"><use href="#glob"/></svg>
<svg class="i" style="left:1397px;top:583px"><use href="#book"/></svg>
<svg class="i" style="left:1397px;top:613px"><use href="#str"/></svg>

<!-- menu 1 -->
<div class="m" style="left:1152px;top:30.500px;width:234px;height:483.500px"></div>
<div style="position:absolute;left:1152px;top:61px;width:234px;height:32px;background:linear-gradient(180deg,#6f8bbf,#7e98c9);border-top:1.500px solid #3f5d92"></div>
<div class="mt" style="left:1191px;top:36.500px">Subscribe-Update Email</div>
<div class="mt" style="left:1191px;top:68px">School Settings</div>
<div class="mt" style="left:1191px;top:98.500px">Security Settings</div>
<div class="mt" style="left:1191px;top:128.500px">Tax Forms</div>
<div class="mt" style="left:1191px;top:158.500px">User Settings</div>
<div class="mt" style="left:1191px;top:188.500px">Teacher Html</div>
<div class="mt" style="left:1191px;top:218.500px">My Lunch Statement</div>
<div class="mt" style="left:1191px;top:248.500px">My Pay Stubs</div>
<div class="mt" style="left:1191px;top:278.500px">Upload Personal Docs</div>
<div class="mt" style="left:1191px;top:308.500px">Training Videos</div>
<div class="mt" style="left:1191px;top:338.500px">Setup Guides</div>
<div class="ms" style="left:1152px;top:363px;width:234px"></div>
<div class="mt" style="left:1191px;top:369.500px">Online Support</div>
<div class="mt" style="left:1191px;top:399.500px">Update Parent Square</div>
<div class="mt" style="left:1191px;top:429.500px">Utilities</div>
<div class="mt" style="left:1191px;top:459.500px">Admin Tasks</div>
<div class="mt" style="left:1191px;top:489.500px">Clearing Browser Cache</div>
<div class="ar" style="top:68px;color:#555">⇒</div><div class="ar" style="top:99px;color:#555">⇒</div><div class="ar" style="top:129px">⇒</div><div class="ar" style="top:159px">⇒</div><div class="ar" style="top:460px">⇒</div>
<svg class="i" style="left:1162px;top:36px"><use href="#mail"/></svg>
<svg class="i" style="left:1162px;top:188px"><use href="#html"/></svg>
<svg class="i" style="left:1162px;top:218px"><use href="#burger"/></svg>
<svg class="i" style="left:1162px;top:278px"><use href="#doc"/></svg>
<svg class="i" style="left:1162px;top:308px"><use href="#film"/></svg>
<svg class="i" style="left:1162px;top:337px"><use href="#help"/></svg>

<!-- highlight circle -->
<div style="position:absolute;left:1253.500px;top:6.500px;width:138px;height:140px;border-radius:50%;background:rgba(245,140,45,.42);border:6px solid #f78f2e"></div>
</body></html>
